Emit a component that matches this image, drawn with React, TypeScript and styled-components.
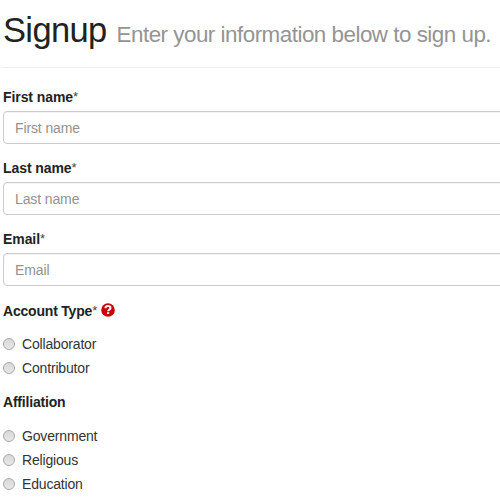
import React from "react";
import styled, { createGlobalStyle } from "styled-components";

const Global = createGlobalStyle`
  *, *::before, *::after { box-sizing: border-box; }
  body { margin: 0; background: #fff; color: #222; overflow: hidden;
    font: 14px/20px "Liberation Sans", Arial, sans-serif; }
`;
const Page = styled.main`
  width: 520px;
  height: 500px;
  padding-left: 3px;
  overflow: hidden;
`;
const Header = styled.header`
  height: 68px;
  padding-top: 10px;
  margin-bottom: 19px;
  border-bottom: 1px solid #eee;
`;
const Title = styled.h1`
  display: flex;
  align-items: baseline;
  gap: 10px;
  margin: 0;
  font-size: 34.5px;
  line-height: 40px;
  font-weight: 400;
  letter-spacing: -0.65px;
  white-space: nowrap;
`;
const Subtitle = styled.small`
  font-size: 22.4px;
  letter-spacing: -0.5px;
  color: #949494;
`;
const Field = styled.div`
  height: 71px;
`;
const Label = styled.label`
  display: flex;
  align-items: center;
  height: 20px;
  margin-bottom: 4px;
  font-weight: 700;
  letter-spacing: -0.08px;
`;
const Star = styled.span`
  font-weight: 400;
  font-size: 13px;
  color: #444;
`;
const Input = styled.input`
  display: block;
  width: 530px;
  height: 33px;
  padding: 6px 11px;
  border: 1px solid #ccc;
  border-radius: 4px;
  font: inherit;
  letter-spacing: -0.12px;
  box-shadow: inset 0 1px 1px rgba(0, 0, 0, 0.05);
  &::placeholder { color: #929292; opacity: 1; }
`;
const Group = styled.section`
  height: 91px;
  padding-top: 1px;
  &:last-child { height: 110px; }
`;
const GroupLabel = styled(Label)<{ $gap: number }>`
  margin-bottom: ${({ $gap }) => $gap}px;
  letter-spacing: -0.2px;
`;
const Option = styled.label`
  display: flex;
  align-items: center;
  height: 24px;
  color: #333;
  letter-spacing: -0.17px;
`;
const Radio = styled.input`
  appearance: none;
  width: 12px;
  height: 12px;
  margin: 0 7px 0 0;
  border: 1px solid #a8a8a8;
  border-radius: 50%;
  background: linear-gradient(#d8d8d8, #e8e8e8);
`;
const HelpIcon = styled.svg`
  width: 14px;
  height: 14px;
  margin: -2px 0 0 4px;
`;

const fields = ["First name", "Last name", "Email"];

function Options({ name, items }: { name: string; items: string[] }) {
  return <>{items.map((item) => (
    <Option key={item}><Radio type="radio" name={name} />{item}</Option>
  ))}</>;
}

export default function App() {
  return (
    <Page>
      <Global />
      <Header><Title>Signup <Subtitle>Enter your information below to sign up.</Subtitle></Title></Header>
      {fields.map((name) => (
        <Field key={name}>
          <Label>{name}<Star>*</Star></Label>
          <Input placeholder={name} />
        </Field>
      ))}
      <Group>
        <GroupLabel $gap={11}>Account Type<Star>*</Star>
          <HelpIcon viewBox="0 0 14 14" aria-label="Help">
            <circle cx="7" cy="7" r="6.8" fill="#cc0008" />
            <path d="M4.4 5.3C4.5 3.8 5.5 3.1 7 3.1s2.5.8 2.5 2.1C9.5 6.7 7.1 6.7 7.1 8.3" fill="none" stroke="#fff" strokeWidth="2" />
            <path d="M6 9.2h2.2v1.8H6z" fill="#fff" />
          </HelpIcon>
        </GroupLabel>
        <Options name="account" items={["Collaborator", "Contributor"]} />
      </Group>
      <Group>
        <GroupLabel $gap={12}>Affiliation</GroupLabel>
        <Options name="affiliation" items={["Government", "Religious", "Education"]} />
      </Group>
    </Page>
  );
}
